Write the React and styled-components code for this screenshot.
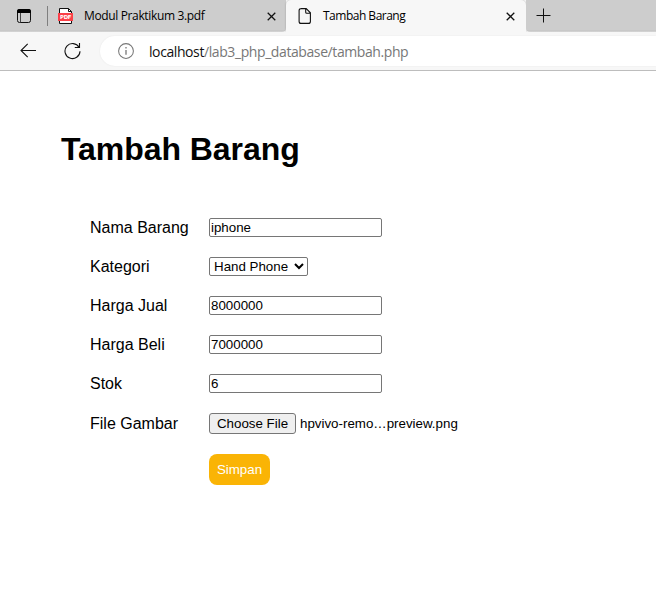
import React from "react";
import styled, { createGlobalStyle } from "styled-components";

const GlobalStyle = createGlobalStyle`
  * { box-sizing: border-box; }
  body {
    margin: 0;
    background: #fff;
    color: #000;
    font-family: "Liberation Sans", Arial, sans-serif;
    overflow: hidden;
  }
`;

const Window = styled.div`
  width: 656px;
  height: 599px;
  display: flex;
  flex-direction: column;
  overflow: hidden;
`;

const TabStrip = styled.div`
  height: 32px;
  flex: none;
  display: flex;
  background: #f7f7f7;
  font: 12px/32px "Open Sans", "Noto Sans", sans-serif;
`;

const StripSection = styled.div`
  display: flex;
  flex: ${(p) => (p.$grow ? "1" : "none")};
  width: ${(p) => (p.$grow ? "auto" : "286px")};
  background: linear-gradient(#cdcdcd 0 30px, #c3c3c3 31px, #e0e0e0 32px);
  border-radius: ${(p) => (p.$grow ? "0 0 0 4px" : "0 0 4px 0")};
`;

const TabActions = styled.div`
  width: 48px;
  padding: 9px 0 0 17px;
  display: flex;
  align-items: flex-start;
`;

const Divider = styled.div`
  width: 1px;
  height: 20px;
  margin-top: 6px;
  margin-left: -1px;
  background: #7f7f7f;
`;

const Tab = styled.div`
  display: flex;
  width: ${(p) => (p.$active ? 240 : 238)}px;
  padding: ${(p) => (p.$active ? "0 11px 0 12px" : "0 10px 0 10px")};
  background: ${(p) => (p.$active ? "#f7f7f7" : "transparent")};
  border-radius: ${(p) => (p.$active ? "5px 5px 0 0" : "0")};
  box-shadow: ${(p) => (p.$active ? "0 0 2px rgba(0,0,0,.28)" : "none")};
  svg { flex: none; }
`;

const TabIcon = styled.span`
  display: flex;
  width: ${(p) => p.$width}px;
  padding-top: 8px;
`;

const TabTitle = styled.span`
  flex: 1;
  white-space: nowrap;
  letter-spacing: ${(p) => p.$tracking}px;
`;

const TabClose = styled.span`
  display: flex;
  padding-top: 12px;
`;

const NewTab = styled.div`
  padding: 8px 0 0 10px;
  display: flex;
`;

const Toolbar = styled.div`
  height: 39px;
  flex: none;
  display: flex;
  background: #f7f7f7;
  border-bottom: 1px solid #bdbdbd;
`;

const ToolButton = styled.div`
  display: flex;
  padding-top: 10px;
  padding-left: ${(p) => p.$inset}px;
  width: ${(p) => p.$width}px;
`;

const AddressBar = styled.div`
  flex: 1;
  height: 30px;
  margin-top: 4px;
  display: flex;
  padding-left: 18px;
  background: #fff;
  border-radius: 15px 0 0 15px;
  box-shadow: 0 0 2px rgba(0, 0, 0, 0.07);
  svg { margin-top: 7px; flex: none; }
`;

const Url = styled.div`
  margin-left: 15px;
  font: 14px/31px "Open Sans", "Noto Sans", sans-serif;
  letter-spacing: -0.41px;
  white-space: nowrap;
  color: #777;
  span { color: #111; }
`;

const Page = styled.main`
  flex: 1;
  padding: 60px 0 0 61px;
`;

const Heading = styled.h1`
  margin: 0;
  font-size: 32px;
  line-height: 37px;
  font-weight: 700;
  letter-spacing: -0.06px;
`;

const Form = styled.form`
  margin: 40px 0 0 29px;
  display: flex;
  flex-direction: column;
`;

const Row = styled.div`
  display: grid;
  grid-template-columns: 119px auto;
  justify-content: start;
  justify-items: start;
  align-items: center;
  height: ${(p) => p.$height || 39}px;
`;

const Label = styled.label`
  font-size: 16px;
  line-height: 18px;
`;

const controlFont = `
  font-family: "Liberation Sans", Arial, sans-serif;
  font-size: 13.333px;
  color: #000;
`;

const TextInput = styled.input`
  ${controlFont}
  appearance: none;
  width: 173px;
  height: 19px;
  margin: 0;
  padding: 0 1px;
  border: 1px solid #767676;
  border-radius: 2px;
  background: #fff;
  outline: none;
`;

const Select = styled.select`
  ${controlFont}
  width: 99px;
  height: 19px;
  margin: 0;
  border: 1px solid #767676;
  border-radius: 2px;
  background: #fff;
`;

const FileField = styled.div`
  ${controlFont}
  display: flex;
  align-items: center;
  gap: 4px;
  white-space: nowrap;
`;

const FileButton = styled.button`
  ${controlFont}
  width: 87px;
  height: 21px;
  padding: 0;
  border: 1px solid #767676;
  border-radius: 3px;
  background: #efefef;
`;

const SubmitButton = styled.button`
  ${controlFont}
  grid-column: 2;
  width: 61px;
  height: 31px;
  padding: 0;
  border: 0;
  border-radius: 8px;
  background: #fab405;
  color: #fff;
`;

const CloseIcon = () => (
  <svg width="9" height="9" viewBox="0 0 9 9">
    <path d="M.7.7l7.6 7.6M8.3.7L.7 8.3" stroke="#111" strokeWidth="1.25" />
  </svg>
);

const TabActionsIcon = () => (
  <svg width="14" height="14" viewBox="0 0 14 14">
    <rect x=".5" y=".5" width="13" height="13" rx="2" fill="none" stroke="#111" />
    <path d="M0 4V2.2Q0 0 2.2 0h9.6Q14 0 14 2.2V4z" fill="#000" />
    <path d="M3.5 4v9.5" stroke="#444" />
  </svg>
);

const PdfIcon = () => (
  <svg width="16" height="17" viewBox="0 0 16 17">
    <path d="M1.5.5h9l3 3v12h-12z" fill="#fff" stroke="#111" />
    <path d="M10.5.5v3h3" fill="none" stroke="#111" />
    <rect x="0" y="5" width="15" height="8" fill="#fb4048" />
    <text x="2" y="11" fontFamily="DejaVu Sans, sans-serif" fontSize="5.4" fontWeight="700" fill="#fff" textLength="11.5">PDF</text>
  </svg>
);

const PageIcon = () => (
  <svg width="14" height="17" viewBox="0 0 14 17">
    <path d="M3 .6h5.2l4.2 4.2v8.6q0 2-2 2H3.1q-2 0-2-2V2.6q0-2 2-2zM7.7.6v3.7q0 1 1 1h3.7" fill="none" stroke="#111" strokeWidth="1.1" />
  </svg>
);

const PlusIcon = () => (
  <svg width="15" height="15" viewBox="0 0 15 15">
    <path d="M7.5.5v14M.5 7.5h14" stroke="#111" />
  </svg>
);

const BackIcon = () => (
  <svg width="17" height="17" viewBox="0 0 17 17">
    <path d="M16 8.5H1M7.7 1.8L1 8.5l6.7 6.7" fill="none" stroke="#111" strokeWidth="1.1" />
  </svg>
);

const ReloadIcon = () => (
  <svg width="17" height="18" viewBox="0 0 17 18">
    <path d="M15.1 5.5A7.5 7.5 0 1 0 16 9.2M15.5.9v4.6h-4.7" fill="none" stroke="#111" strokeWidth="1.1" />
  </svg>
);

const InfoIcon = () => (
  <svg width="16" height="16" viewBox="0 0 16 16">
    <circle cx="8" cy="8" r="7.4" fill="none" stroke="#777" strokeWidth="1.05" />
    <path d="M8 7v4.7M8 4v1.6" stroke="#777" strokeWidth="1.3" />
  </svg>
);

const TextRow = ({ label, value }) => (
  <Row>
    <Label>{label}</Label>
    <TextInput type="text" defaultValue={value} />
  </Row>
);

export default function App() {
  return (
    <>
      <GlobalStyle />
      <Window>
        <TabStrip>
          <StripSection>
            <TabActions><TabActionsIcon /></TabActions>
            <Divider />
            <Tab>
              <TabIcon $width={26}><PdfIcon /></TabIcon>
              <TabTitle $tracking={-0.36}>Modul Praktikum 3.pdf</TabTitle>
              <TabClose><CloseIcon /></TabClose>
            </Tab>
          </StripSection>
          <Tab $active>
            <TabIcon $width={25}><PageIcon /></TabIcon>
            <TabTitle $tracking={-0.5}>Tambah Barang</TabTitle>
            <TabClose><CloseIcon /></TabClose>
          </Tab>
          <StripSection $grow>
            <NewTab><PlusIcon /></NewTab>
          </StripSection>
        </TabStrip>
        <Toolbar>
          <ToolButton $inset={20} $width={64}><BackIcon /></ToolButton>
          <ToolButton $inset={0} $width={36}><ReloadIcon /></ToolButton>
          <AddressBar>
            <InfoIcon />
            <Url><span>localhost</span>/lab3_php_database/tambah.php</Url>
          </AddressBar>
        </Toolbar>
        <Page>
          <Heading>Tambah Barang</Heading>
          <Form>
            <TextRow label="Nama Barang" value="iphone" />
            <Row>
              <Label>Kategori</Label>
              <Select defaultValue="Hand Phone"><option>Hand Phone</option></Select>
            </Row>
            <TextRow label="Harga Jual" value="8000000" />
            <TextRow label="Harga Beli" value="7000000" />
            <TextRow label="Stok" value="6" />
            <Row $height={41}>
              <Label>File Gambar</Label>
              <FileField>
                <FileButton type="button">Choose File</FileButton>
                <span>hpvivo-remo…preview.png</span>
              </FileField>
            </Row>
            <Row $height={51}>
              <SubmitButton type="button">Simpan</SubmitButton>
            </Row>
          </Form>
        </Page>
      </Window>
    </>
  );
}
